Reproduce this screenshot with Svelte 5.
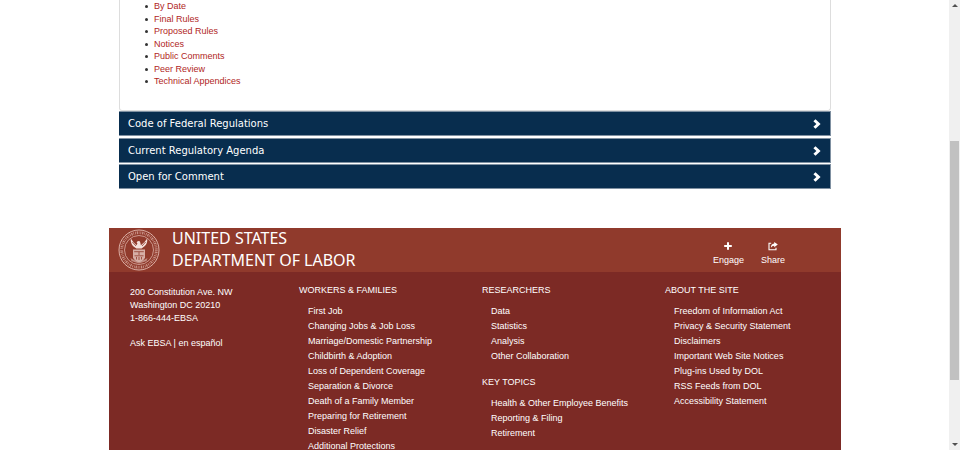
<script>
  const rules = ['By Date', 'Final Rules', 'Proposed Rules', 'Notices', 'Public Comments', 'Peer Review', 'Technical Appendices'];
  const sections = ['Code of Federal Regulations', 'Current Regulatory Agenda', 'Open for Comment'];
  const columns = [
    [{
      title: 'WORKERS & FAMILIES',
      links: ['First Job', 'Changing Jobs & Job Loss', 'Marriage/Domestic Partnership', 'Childbirth & Adoption', 'Loss of Dependent Coverage', 'Separation & Divorce', 'Death of a Family Member', 'Preparing for Retirement', 'Disaster Relief', 'Additional Protections']
    }],
    [
      { title: 'RESEARCHERS', links: ['Data', 'Statistics', 'Analysis', 'Other Collaboration'] },
      { title: 'KEY TOPICS', links: ['Health & Other Employee Benefits', 'Reporting & Filing', 'Retirement'] }
    ],
    [{
      title: 'ABOUT THE SITE',
      links: ['Freedom of Information Act', 'Privacy & Security Statement', 'Disclaimers', 'Important Web Site Notices', 'Plug-ins Used by DOL', 'RSS Feeds from DOL', 'Accessibility Statement']
    }]
  ];
</script>

<div class="window">
  <div class="page">
    <main>
      <div class="panel">
        <ul class="rules">
          {#each rules as rule}
            <li><a href="#rules">{rule}</a></li>
          {/each}
        </ul>
      </div>
      <div class="accordion">
        {#each sections as section}
          <button type="button">
            <span>{section}</span>
            <svg width="8" height="10" viewBox="0 0 8 10" aria-hidden="true">
              <path d="M2.5 0.2 7.6 5 2.5 9.8 0.4 7.8 3.4 5 0.4 2.2Z" fill="#fff" />
            </svg>
          </button>
        {/each}
      </div>
    </main>

    <footer>
      <div class="banner">
        <svg class="seal" width="42" height="42" viewBox="0 0 42 42" aria-hidden="true" fill="none" stroke="#dcb0a6">
          <circle cx="21" cy="21" r="20" stroke-width="1" />
          <circle cx="21" cy="21" r="14.5" stroke-width="0.8" />
          <circle cx="21" cy="21" r="17.3" stroke-width="2.8" stroke-dasharray="0.8 0.9 1.3 0.8 0.6 1.1" opacity="0.75" />
          <g stroke="none" fill="#f3dfda">
            <path d="M12.8 9.5 Q14.5 12.5 18.6 16.2 L19.4 14.6 18.6 13.2 20 12 21.8 12.2 22.4 14 22.9 16.2 Q27.5 12.5 29.2 9.5 Q29.8 14.5 26.5 17.3 L23.6 19.5 H18.4 L15.5 17.5 Q12.3 14.5 12.8 9.5Z" />
            <path d="M15 20.5H27V28.5Q26 31.5 21 33 16 31.5 15 28.5Z" opacity="0.7" />
            <path d="M12.5 29 16 31 21 32.5 26 31 29.5 29 28.5 32 21 34.5 13.5 32Z" opacity="0.5" />
          </g>
          <g stroke="#8f3a2c" stroke-width="0.8">
            <path d="M16.2 22.7H25.8M16.5 26.8H25.5M21 23V26M18.5 28V30.5M21 28V31M23.5 28V30.5M14.4 13 18 17M27.6 13 24 17" />
          </g>
        </svg>
        <a class="brand" href="#dol">UNITED STATES<br />DEPARTMENT OF LABOR</a>
        <nav class="actions" aria-label="Social">
          <a href="#engage">
            <svg width="10" height="10" viewBox="0 0 10 10" aria-hidden="true"><path d="M4 1.2H6V4H8.8V6H6V8.8H4V6H1.2V4H4Z" fill="#fff" /></svg>
            <span>Engage</span>
          </a>
          <a href="#share">
            <svg width="10" height="10" viewBox="0 0 10 10" aria-hidden="true" fill="none">
              <path d="M3.2 2.3H1V8.7H8V6.7" stroke="#fff" stroke-width="1.1" />
              <path d="M6.2 0.9 9.8 3.6 6.2 6.3V4.7Q4 4.6 2.9 6.8 2.8 2.8 6.2 2.5Z" fill="#fff" />
            </svg>
            <span>Share</span>
          </a>
        </nav>
      </div>

      <div class="links">
        <address>
          <span>200 Constitution Ave. NW</span>
          <span>Washington DC 20210</span>
          <span>1-866-444-EBSA</span>
          <span class="ask"><a href="#ask">Ask EBSA</a> | <a href="#es">en español</a></span>
        </address>
        {#each columns as groups}
          <div class="column">
            {#each groups as group}
              <section>
                <h2>{group.title}</h2>
                <ul>
                  {#each group.links as link}
                    <li><a href="#footer">{link}</a></li>
                  {/each}
                </ul>
              </section>
            {/each}
          </div>
        {/each}
      </div>
    </footer>
  </div>

  <div class="scrollbar" aria-hidden="true">
    <svg width="6" height="3" viewBox="0 0 6 3"><path d="M0 3 3 0 6 3Z" fill="#505050" /></svg>
    <div class="track"><div class="thumb"></div></div>
    <svg width="6" height="3" viewBox="0 0 6 3"><path d="M0 0 3 3 6 0Z" fill="#505050" /></svg>
  </div>
</div>

<style>
  :global(body) { margin: 0; background: #fff; }
  .window {
    display: flex;
    height: 100vh;
    overflow: hidden;
    font-family: "Liberation Sans", Arial, sans-serif;
    font-size: 9px;
    line-height: 12px;
    color: #222;
  }
  .page { flex: 1; min-width: 0; padding: 0 108px 0 109px; }
  a { color: inherit; text-decoration: none; }
  ul { list-style: none; margin: 0; padding: 0; }
  main { padding: 0 10px; }
  .panel {
    box-sizing: border-box;
    padding: 0 0 23px 34px;
    border: 1px solid #ddd;
    border-top: 0;
    border-radius: 0 0 3px 3px;
  }
  .rules {
    display: flex;
    flex-direction: column;
    justify-content: space-between;
    height: 87px;
  }
  .rules li { position: relative; color: #b01e24; }
  .rules li::before {
    content: "";
    position: absolute;
    left: -9px;
    top: 5px;
    width: 3px;
    height: 3px;
    border-radius: 50%;
    background: #333;
  }
  .accordion {
    display: flex;
    flex-direction: column;
    justify-content: space-between;
    height: 78px;
  }
  .accordion button {
    display: flex;
    align-items: center;
    justify-content: space-between;
    box-sizing: border-box;
    height: 25px;
    padding: 1px 9px 0;
    border: 1px solid #7f90a1;
    border-width: 1px 1px 1px 0;
    background: #082d4e;
    color: #fff;
    font: 10px/14px "DejaVu Sans", Verdana, sans-serif;
    text-align: left;
  }
  footer { margin-top: 39px; background: #7c2a25; color: #fff; }
  .banner {
    display: flex;
    align-items: center;
    height: 44px;
    padding: 0 56px 0 9px;
    background: #903a2c;
  }
  .brand { margin-left: 12px; padding-bottom: 2px; font: 16px/22px "Noto Sans", "Open Sans", sans-serif; }
  .actions { display: flex; gap: 17px; margin-left: auto; padding-top: 6px; }
  .actions a { display: flex; flex-direction: column; align-items: center; gap: 3px; }
  .links {
    display: grid;
    grid-template-columns: repeat(4, 1fr);
    height: 200px;
    padding-top: 12px;
  }
  address {
    display: flex;
    flex-direction: column;
    justify-content: space-between;
    height: 63px;
    padding: 2px 0 0 21px;
    font-style: normal;
  }
  .ask { margin-top: 12px; }
  .column { padding-left: 7px; }
  h2 { margin: 0 0 8px; font-size: 9px; line-height: 12px; font-weight: 400; }
  section { margin-bottom: 12px; }
  .column ul { padding-left: 9px; line-height: 15px; }
  .scrollbar {
    display: flex;
    flex-direction: column;
    align-items: center;
    box-sizing: border-box;
    width: 11px;
    padding: 4px 0;
    background: #f0f0f0;
  }
  .track { flex: 1; align-self: stretch; padding: 134px 1px 0; }
  .thumb { height: 239px; background: #c1c1c1; }
</style>
